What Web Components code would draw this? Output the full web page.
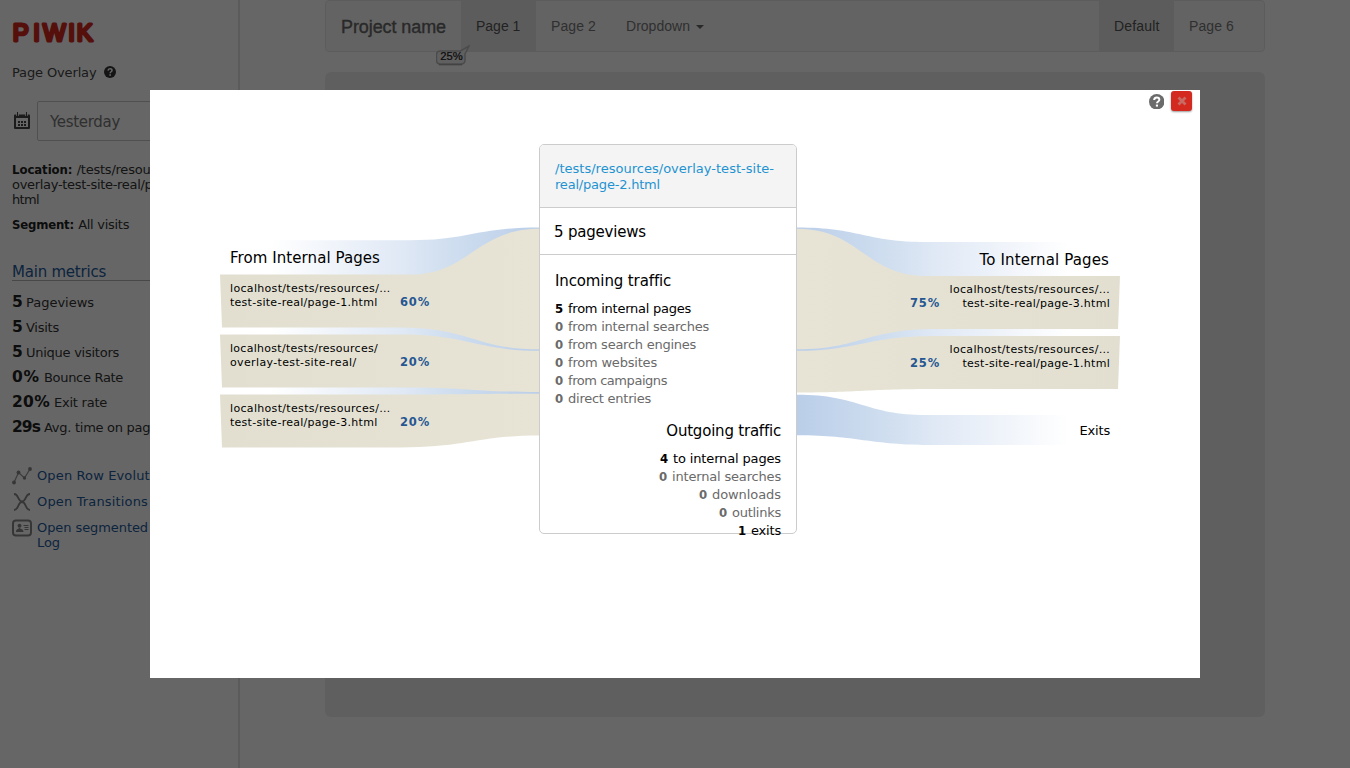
<!DOCTYPE html>
<html lang="en">
<head>
<meta charset="utf-8">
<title>Page Overlay</title>
<style>
html,body{margin:0;height:100%;overflow:hidden;background:#fff}
body{font-family:"DejaVu Sans",Verdana,sans-serif;font-size:13px;color:#000}
</style>
</head>
<body>
<overlay-app></overlay-app>
<script>
const define = (name, html, ready) => customElements.define(name, class extends HTMLElement {
  constructor() {
    super();
    const t = document.createElement('template');
    t.innerHTML = html;
    this.attachShadow({mode: 'open'}).appendChild(t.content.cloneNode(true));
  }
  connectedCallback() { if (ready) ready.call(this, this.shadowRoot); }
});

/* A run of text tracked to a given width (attribute w). */
define('fit-text', `<style>:host{display:inline-block;white-space:nowrap}span{display:inline-block;white-space:pre}</style><span><slot></slot></span>`, function (root) {
  const s = root.querySelector('span');
  const w = parseFloat(this.getAttribute('w'));
  const n = this.textContent.length;
  if (!w) return;
  const natural = s.getBoundingClientRect().width;
  s.style.letterSpacing = ((w - natural) / n) + 'px';
});

define('help-icon', `<style>:host{display:inline-block;width:var(--s,12px);height:var(--s,12px)}svg{display:block}</style>
<svg viewBox="0 0 16 16" width="100%" height="100%"><circle cx="8" cy="8" r="8" fill="currentColor"/><path d="M5.3 6.2C5.5 4.3 6.6 3.7 8 3.7c1.6 0 2.7.8 2.7 2.2 0 1.8-2.5 1.8-2.5 3.7" fill="none" stroke="var(--q,#fff)" stroke-width="2"/><path d="M7.1 10.9h2.2v2.1H7.1z" fill="var(--q,#fff)"/></svg>`);

define('metric-row', `<style>:host{display:flex;align-items:baseline;height:25px;line-height:25px;gap:4px;color:#333}b{font-size:15.5px;color:#222}</style><b><slot name="n"></slot></b><slot></slot>`);

define('action-link', `<style>:host{display:flex;height:var(--h,26px);line-height:15px;font-size:13px;color:#1e5a9c;white-space:nowrap}i{width:25px;flex:none;margin-top:-1px}</style><i><slot name="icon"></slot></i><div><slot></slot></div>`);

define('side-bar', `<style>
:host{display:block;box-sizing:border-box;width:240px;height:768px;border-right:2px solid #e4e4e4;padding:20px 0 0 12px;overflow:hidden;color:#333;white-space:nowrap}
.logo{display:block;overflow:visible}
.title{display:flex;align-items:center;height:20px;margin-top:16px;gap:7.5px;color:#444}
.date{display:flex;align-items:center;height:40px;margin-top:19px}
.date svg{margin-right:6px}
.box{box-sizing:border-box;flex:1;height:40px;line-height:40px;border:1px solid #c8c8c8;border-radius:2px 0 0 2px;padding-left:12px;font-size:15px;color:#777}
.loc{line-height:15px;margin-top:21px}.seg{line-height:15px;margin-top:10px}
b{color:#222;font-family:"DejaVu Sans Condensed","DejaVu Sans",sans-serif;font-stretch:condensed}
h2{margin:32px 12px 0 0;height:16px;line-height:17px;font-size:15px;font-weight:400;color:#1e5a9c;border-bottom:1px solid #b5b5b5}
.metrics{margin-top:9px}.links{margin-top:28px}
</style>
<svg class="logo" width="90" height="26"><text x="0.7 21.3 31 56.3 64.700" y="21.2" font-family="Liberation Sans" font-size="24" fill="#d4291f" stroke="#d4291f" stroke-width="3" stroke-linejoin="round" stroke-linecap="round">PIWIK</text></svg>
<div class="title"><fit-text w="84.5">Page Overlay</fit-text><help-icon style="color:#333"></help-icon></div>
<div class="date"><svg width="19" height="18" viewBox="0 0 19 18"><path d="M3 3.5h14v12.5h-14z" fill="none" stroke="#444" stroke-width="2" stroke-linejoin="round"/><path d="M3 3h14v3H3z" fill="#444"/><path d="M5.500 1v3M14.500 1v3" stroke="#fff" stroke-width="2.400"/><path d="M5.500 0v4M14.500 0v4" stroke="#444" stroke-width="1"/><path d="M6 9h2v2H6zM9 9h2v2H9zM12 9h2v2h-2zM6 12h2v2H6zM9 12h2v2H9zM12 12h2v2h-2z" fill="#444"/></svg><div class="box"><fit-text w="70">Yesterday</fit-text></div></div>
<div class="loc"><b><fit-text w="60.5">Location:</fit-text></b> <fit-text w="104">/tests/resources/</fit-text><br><fit-text w="180">overlay-test-site-real/page-2.</fit-text><br><fit-text w="27">html</fit-text></div>
<div class="seg"><b><fit-text w="62">Segment:</fit-text></b> <fit-text w="51">All visits</fit-text></div>
<h2><fit-text w="94">Main metrics</fit-text></h2>
<div class="metrics">
<metric-row><fit-text slot="n" w="10">5</fit-text><fit-text w="68">Pageviews</fit-text></metric-row>
<metric-row><fit-text slot="n" w="10">5</fit-text><fit-text w="33">Visits</fit-text></metric-row>
<metric-row><fit-text slot="n" w="10">5</fit-text><fit-text w="93">Unique visitors</fit-text></metric-row>
<metric-row><fit-text slot="n" w="28">0%</fit-text><fit-text w="79">Bounce Rate</fit-text></metric-row>
<metric-row><fit-text slot="n" w="38">20%</fit-text><fit-text w="53">Exit rate</fit-text></metric-row>
<metric-row><fit-text slot="n" w="28">29s</fit-text><fit-text w="114">Avg. time on page</fit-text></metric-row>
</div>
<div class="links">
<action-link><svg slot="icon" width="20" height="18" viewBox="0 0 20 18"><path d="M2 15.500L6.500 5.500L12.500 11L18 2" fill="none" stroke="#999" stroke-width="1.300"/><g fill="#888"><circle cx="2" cy="15.500" r="1.900"/><circle cx="6.500" cy="5.500" r="1.900"/><circle cx="12.500" cy="11" r="1.700"/><circle cx="18" cy="2" r="1.900"/></g></svg><fit-text w="133">Open Row Evolution</fit-text></action-link>
<action-link><svg slot="icon" width="20" height="18" viewBox="0 0 20 18"><path d="M2 1C7 1 5.500 8.500 10 8.500S13 1 18 1M2 17C7 17 5.500 9 10 9S13 17 18 17" fill="none" stroke="#888" stroke-width="1.800"/></svg><fit-text w="111">Open Transitions</fit-text></action-link>
<action-link style="--h:32px"><svg slot="icon" width="20" height="18" viewBox="0 0 20 18"><rect x="1" y="1.500" width="18" height="15" rx="3" fill="none" stroke="#888" stroke-width="2"/><circle cx="7.500" cy="6.800" r="2" fill="#888"/><path d="M4 13c0-3 2-3 3.500-4 1.500 1 4 1 4 4zM11.500 6h5v1h-5zM12.500 8h4v1h-4zM12.500 10h4v1h-4z" fill="#888"/></svg><fit-text w="111">Open segmented</fit-text> <fit-text w="42">Visitor</fit-text><br><fit-text w="23">Log</fit-text></action-link>
</div>`);

define('nav-item', `<style>:host{display:block;padding:0 15px;width:45px;line-height:50px;color:#777;white-space:nowrap}:host([active]){background:#e7e7e7;color:#555}</style><slot></slot>`);

define('site-page', `<style>
:host{display:block;flex:1;height:768px;font-family:"Liberation Sans",Arial,sans-serif;font-size:14px}
nav{display:flex;box-sizing:border-box;width:940px;height:52px;margin-left:85px;border:1px solid #e7e7e7;border-radius:4px;background:#f8f8f8;padding-right:15px;position:relative}
.brand{font-size:18px;line-height:52px;height:50px;color:#666;padding:0 15px;width:105px;-webkit-text-stroke:.35px #666}
.gap{flex:1}
.caret{display:inline-block;border:4px solid transparent;border-top-color:#666;border-bottom:0;vertical-align:middle;margin-left:6px}
.panel{width:940px;height:645px;margin:20px 0 0 85px;border-radius:6px;background:#eee}
.badge{position:absolute;left:110px;top:44px}
</style>
<nav><div class="brand"><fit-text w="105">Project name</fit-text></div><nav-item active>Page 1</nav-item><nav-item><fit-text w="45">Page 2</fit-text></nav-item><nav-item style="width:80px"><fit-text w="64">Dropdown</fit-text><span class="caret"></span></nav-item><div class="gap"></div><nav-item active><fit-text w="45.5">Default</fit-text></nav-item><nav-item><fit-text w="45">Page 6</fit-text></nav-item>
<svg class="badge" width="36" height="24"><path d="M4.500 6h20l8.500-5-4 8V15q0 4-4 4H4.500q-4 0-4-4V10Q.5 6 4.500 6z" fill="#f0f0f0" stroke="#bbb" stroke-width="1.500"/><path d="M3 19.800h23" stroke="#999" stroke-width="1"/><text x="4.300" y="14.800" font-family="Liberation Sans" font-size="10" textLength="22.500" lengthAdjust="spacingAndGlyphs" fill="#222" stroke="#222" stroke-width=".2">25%</text></svg></nav>
<div class="panel"></div>`);

define('page-group', `<style>
:host{display:block;height:60px;font-size:11px;line-height:14px}
.row{display:flex;align-items:flex-end}
.t{width:170px}
b{color:#255792;width:40px;font-size:11.5px;margin-bottom:1px}
:host([right]) .row{flex-direction:row-reverse}
:host([right]) .t{text-align:right}
</style><div class="row"><div class="t"><slot></slot></div><b><slot name="p"></slot></b></div>`);

define('traffic-line', `<style>:host{display:block;height:18px;line-height:18px;font-size:13px;color:#6a6a6a;white-space:nowrap}:host([on]){color:#000}b{display:inline-block;width:8px;margin-right:5px;font-family:"DejaVu Sans Condensed","DejaVu Sans",sans-serif;font-stretch:condensed}</style><b><slot name="n"></slot></b><slot></slot>`);

define('transition-card', `<style>
:host{display:block;box-sizing:border-box;width:258px;height:390px;border:1px solid #ccc;border-radius:5px;background:#fff}
.url{box-sizing:border-box;height:63px;background:#f4f4f4;border-bottom:1px solid #ccc;border-radius:4px 4px 0 0;padding:16px 15px;line-height:16px;font-size:13px;color:#1e93d1}
.views{height:46px;line-height:48px;border-bottom:1px solid #ccc;padding-left:14px;font-size:15px}
.list{padding:16px 15px 0}
h3{margin:0 0 9px;height:20px;line-height:20px;font-size:15px;font-weight:400}
.out{text-align:right;padding-top:13px}
</style>
<div class="url"><fit-text w="219">/tests/resources/overlay-test-site-</fit-text><br><fit-text w="105">real/page-2.html</fit-text></div>
<div class="views"><fit-text w="92">5 pageviews</fit-text></div>
<div class="list"><h3><fit-text w="116">Incoming traffic</fit-text></h3>
<traffic-line on><span slot="n">5</span><fit-text w="123">from internal pages</fit-text></traffic-line>
<traffic-line><span slot="n">0</span><fit-text w="141">from internal searches</fit-text></traffic-line>
<traffic-line><span slot="n">0</span><fit-text w="128">from search engines</fit-text></traffic-line>
<traffic-line><span slot="n">0</span><fit-text w="89">from websites</fit-text></traffic-line>
<traffic-line><span slot="n">0</span><fit-text w="99">from campaigns</fit-text></traffic-line>
<traffic-line><span slot="n">0</span><fit-text w="83">direct entries</fit-text></traffic-line>
<div class="out"><h3><fit-text w="114.5">Outgoing traffic</fit-text></h3>
<traffic-line on><span slot="n">4</span><fit-text w="108">to internal pages</fit-text></traffic-line>
<traffic-line><span slot="n">0</span><fit-text w="109">internal searches</fit-text></traffic-line>
<traffic-line><span slot="n">0</span><fit-text w="69">downloads</fit-text></traffic-line>
<traffic-line><span slot="n">0</span><fit-text w="49">outlinks</fit-text></traffic-line>
<traffic-line on><span slot="n">1</span><fit-text w="30">exits</fit-text></traffic-line>
</div></div>`);

define('transitions-popup', `<style>
:host{display:block;position:absolute;left:150px;top:90px;width:1050px;height:588px;background:#fff}
.curves{position:absolute;left:0;top:0}
.tools{display:flex;justify-content:flex-end;align-items:center;height:22px;padding-right:8px;gap:7px}
.tools help-icon{margin-top:1px}
.close{width:21px;height:20px;border-radius:3px;background:#d4291f;box-shadow:0 1px 2px #0006;display:flex;align-items:center;justify-content:center}
.cols{position:relative;display:grid;grid-template-columns:309px 258px 313px;padding:32px 0 0 80px}
.side{padding-top:104px}
h3{margin:0 0 13.5px;height:20px;line-height:20px;font-size:15px;font-weight:400}
.right{text-align:right;padding-top:106px}
.right h3{margin-bottom:13px;padding-right:1px}
.exits{font-size:13px;line-height:16px;padding-top:20px}
</style>
<svg class="curves" width="1050" height="588" viewBox="150 90 1050 588">
<defs>
<linearGradient id="bl" gradientUnits="userSpaceOnUse" x1="270" x2="540"><stop stop-color="#fff"/><stop offset=".5" stop-color="#dfe8f5"/><stop offset=".63" stop-color="#d2e0f0"/><stop offset="1" stop-color="#bacee9"/></linearGradient>
<linearGradient id="br" gradientUnits="userSpaceOnUse" x1="1068" x2="797"><stop stop-color="#fff"/><stop offset=".5" stop-color="#dfe8f5"/><stop offset=".63" stop-color="#d2e0f0"/><stop offset="1" stop-color="#bacee9"/></linearGradient>
<linearGradient id="gl" gradientUnits="userSpaceOnUse" x1="220" x2="540"><stop stop-color="#e2dfd0"/><stop offset="1" stop-color="#e7e4d6"/></linearGradient>
<linearGradient id="gr" gradientUnits="userSpaceOnUse" x1="1120" x2="797"><stop stop-color="#e2dfd0"/><stop offset="1" stop-color="#e7e4d6"/></linearGradient>
</defs>
<path fill="url(#bl)" d="M270 240.300H410C470 240.300 475 227.500 540 227.500V395C475 395 470 396 410 396H270z"/>
<g fill="url(#gl)">
<path d="M220 274.600H410C470 274.600 475 228.700 540 228.700V349.300C475 349.300 470 327.400 400 327.400H222z"/>
<path d="M220 334.600H400C470 334.600 475 350.800 540 350.800V392C475 392 470 387.400 400 387.400H222z"/>
<path d="M220 394.600H400C470 394.600 475 393.800 540 393.800V435.600C475 435.600 470 447.400 400 447.400H222z"/>
</g>
<path fill="url(#br)" d="M1068 242H927C865 242 860 227.500 797 227.500V352C860 352 865 337 937 337H1068z"/>
<path fill="url(#br)" d="M1068 415H927C865 415 860 394.700 797 394.700V435.200C860 435.200 865 445 937 445H1068z"/>
<g fill="url(#gr)">
<path d="M1120 276H927C865 276 860 228.700 797 228.700V349.300C860 349.300 865 329 937 329H1118z"/>
<path d="M1120 336H937C865 336 860 350.800 797 350.800V392.500C860 392.500 865 389 937 389H1118z"/>
</g>
</svg>
<div class="tools"><help-icon style="--s:15.500px;color:#6b6b6b"></help-icon><div class="close"><svg width="10" height="10"><path d="M1.500 1.500l7 7M8.500 1.500l-7 7" stroke="#c96a63" stroke-width="2.800"/></svg></div></div>
<div class="cols">
<div class="side"><h3><fit-text w="150">From Internal Pages</fit-text></h3>
<page-group><fit-text w="160.5">localhost/tests/resources/…</fit-text><br><fit-text w="147.5">test-site-real/page-1.html</fit-text><fit-text slot="p" w="30">60%</fit-text></page-group>
<page-group><fit-text w="148">localhost/tests/resources/</fit-text><br><fit-text w="126.5">overlay-test-site-real/</fit-text><fit-text slot="p" w="30">20%</fit-text></page-group>
<page-group><fit-text w="160.5">localhost/tests/resources/…</fit-text><br><fit-text w="147.5">test-site-real/page-3.html</fit-text><fit-text slot="p" w="30">20%</fit-text></page-group>
</div>
<transition-card></transition-card>
<div class="side right"><h3><fit-text w="129.5">To Internal Pages</fit-text></h3>
<page-group right><fit-text w="160.5">localhost/tests/resources/…</fit-text><br><fit-text w="147.5">test-site-real/page-3.html</fit-text><fit-text slot="p" w="30">75%</fit-text></page-group>
<page-group right><fit-text w="160.5">localhost/tests/resources/…</fit-text><br><fit-text w="147.5">test-site-real/page-1.html</fit-text><fit-text slot="p" w="30">25%</fit-text></page-group>
<div class="exits"><fit-text w="30.500">Exits</fit-text></div>
</div>
</div>`);

define('overlay-app', `<style>
:host{display:block;position:relative;width:1350px;height:768px;overflow:hidden}
.page{display:flex}
.shade{position:absolute;inset:0;background:rgba(0,0,0,.6)}
</style>
<div class="page"><side-bar></side-bar><site-page></site-page></div><div class="shade"></div><transitions-popup></transitions-popup>`);
</script>
</body>
</html>
